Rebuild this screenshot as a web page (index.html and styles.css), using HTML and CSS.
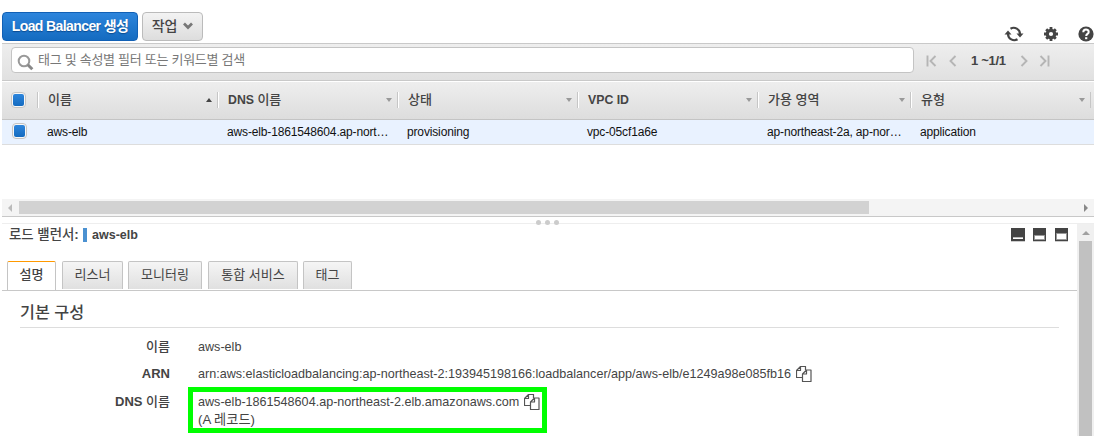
FILE: index.html
```html
<!DOCTYPE html>
<html lang="ko">
<head>
<meta charset="utf-8">
<title>Load Balancer</title>
<link rel="stylesheet" href="styles.css">
</head>
<body>
<svg class="defs" width="0" height="0">
  <symbol id="copy" viewBox="0 0 16 16"><path d="M6 11.500H.5v-7l4-4h5v3.500M4.500.5v4h-4M10.500 4h4.500v11.500H6.500V8zM10.500 4v4h-4" fill="none" stroke="#555" stroke-width="1.200" stroke-linejoin="round"/></symbol>
</svg>
<main class="console">
  <div class="actions">
    <button class="btn primary">Load Balancer 생성</button>
    <button class="btn menu">작업
      <svg width="10" height="8" viewBox="0 0 10 8"><path d="M1 1.500 5 5.500 9 1.500" fill="none" stroke="#777" stroke-width="2.700"/></svg>
    </button>
    <div class="tools">
      <svg width="20" height="16" viewBox="0 0 20 16"><g fill="none" stroke="#444" stroke-width="2.200"><path d="M6.500 2.700A6.300 6.300 0 0 1 16 8M13.500 13.300A6.300 6.300 0 0 1 4 8"/></g><path d="M12.500 7.500h7L16 11.500zM.5 8.500h7L4 4.500z" fill="#444"/></svg>
      <svg width="14" height="14" viewBox="0 0 14 14"><circle cx="7" cy="7" r="3.700" fill="none" stroke="#444" stroke-width="3.200"/><path d="M7 0v3M7 11v3M0 7h3M11 7h3M2.200 2.200l2 2M9.800 9.800l2 2M11.800 2.200l-2 2M4.200 9.800l-2 2" stroke="#444" stroke-width="2.800"/></svg>
      <svg width="16" height="16" viewBox="0 0 16 16"><circle cx="8" cy="8" r="7.600" fill="#444"/><path d="M5.300 6.200c0-3.600 5.400-3.400 5.400-.3C10.700 8 8.200 7.800 8.200 10" fill="none" stroke="#fff" stroke-width="2"/><path d="M7.100 11.200h2.200v2H7.100z" fill="#fff"/></svg>
    </div>
  </div>
  <div class="filter">
    <div class="search">
      <svg width="17" height="17" viewBox="0 0 17 17"><circle cx="7" cy="7" r="5.300" fill="none" stroke="#999" stroke-width="2"/><path d="m10.800 10.800 4.500 4.500" stroke="#888" stroke-width="3"/></svg>
      <span>태그 및 속성별 필터 또는 키워드별 검색</span>
    </div>
    <div class="pager">
      <svg width="11" height="12" viewBox="0 0 11 12"><path d="M1.500.5v11M9.500 1l-5 5 5 5" fill="none" stroke="#b5b5b5" stroke-width="1.900"/></svg>
      <svg width="8" height="12" viewBox="0 0 8 12"><path d="M6.500 1l-5 5 5 5" fill="none" stroke="#b5b5b5" stroke-width="1.900"/></svg>
      <b>1 ~1/1</b>
      <svg width="8" height="12" viewBox="0 0 8 12"><path d="M1.500 1l5 5-5 5" fill="none" stroke="#b5b5b5" stroke-width="1.900"/></svg>
      <svg width="11" height="12" viewBox="0 0 11 12"><path d="M9.500.5v11M1.500 1l5 5-5 5" fill="none" stroke="#b5b5b5" stroke-width="1.900"/></svg>
    </div>
  </div>
  <div class="row head">
    <div class="check"><i></i></div>
    <div class="cell ko">이름<i class="sort up"></i></div>
    <div class="cell"><span>DNS <span class="ko">이름</span></span><i class="sort"></i></div>
    <div class="cell ko">상태<i class="sort"></i></div>
    <div class="cell">VPC ID<i class="sort"></i></div>
    <div class="cell ko">가용 영역<i class="sort"></i></div>
    <div class="cell ko">유형<i class="sort"></i></div>
    <div class="cell"></div>
  </div>
  <div class="row data">
    <div class="check"><i></i></div>
    <div class="cell">aws-elb</div>
    <div class="cell">aws-elb-1861548604.ap-nort…</div>
    <div class="cell">provisioning</div>
    <div class="cell">vpc-05cf1a6e</div>
    <div class="cell">ap-northeast-2a, ap-nor…</div>
    <div class="cell">application</div>
  </div>
  <div class="hscroll"><i class="left"></i><div class="hthumb"></div><i class="right"></i></div>
  <div class="splitter"><i></i><i></i><i></i></div>
  <section class="details">
    <div class="pane">
      <div class="title"><span class="label">로드 밸런서<b>:</b></span><i class="mark"></i><b>aws-elb</b>
        <div class="layouts">
          <svg width="14" height="14"><path d="M0 0h14v13H0z" fill="#444"/><path d="M0 13h14v1H0z" fill="#ccc"/><path d="M2 9h10v2H2z" fill="#fff"/><path d="M2 9h10v.8H2z" fill="#aaa"/></svg>
          <svg width="13" height="14"><path d="M0 0h13v13H0z" fill="#444"/><path d="M0 13h13v1H0z" fill="#ccc"/><path d="M1.500 7.500h10v4h-10z" fill="#fff" stroke="#999"/></svg>
          <svg width="13" height="14"><path d="M0 0h13v13H0z" fill="#444"/><path d="M0 13h13v1H0z" fill="#ccc"/><path d="M1.500 5.500h10v6h-10z" fill="#fff" stroke="#999"/></svg>
        </div>
      </div>
      <nav class="tabs"><a class="tab active">설명</a><a class="tab t2">리스너</a><a class="tab t3">모니터링</a><a class="tab t4">통합 서비스</a><a class="tab t5">태그</a></nav>
      <h2>기본 구성</h2>
      <dl>
        <dt class="ko">이름</dt><dd>aws-elb</dd>
        <dt>ARN</dt><dd><span class="arn">arn:aws:elasticloadbalancing:ap-northeast-2:193945198166:loadbalancer/app/aws-elb/e1249a98e085fb16</span><svg class="copy"><use href="#copy"/></svg></dd>
        <dt>DNS <span class="ko">이름</span></dt><dd class="dns"><span class="host">aws-elb-1861548604.ap-northeast-2.elb.amazonaws.com</span><svg class="copy"><use href="#copy"/></svg><br><span class="record">(A 레코드)</span></dd>
      </dl>
    </div>
    <div class="vscroll"><i class="arrow"></i><div class="vthumb"></div></div>
  </section>
</main>
</body>
</html>
```
FILE: styles.css
```css
*, *::before { box-sizing: border-box; }
body { margin: 0; background: #fff; color: #444; font: 12px/16px "Liberation Sans", "Noto Sans CJK KR", sans-serif; overflow: hidden; }
.defs { position: absolute; }
svg { display: block; flex: none; }
.console { width: 1092px; height: 436px; margin-left: 2px; display: flex; flex-direction: column; }

.actions { height: 43px; flex: none; padding-top: 12px; display: flex; align-items: flex-start; gap: 4px; }
.btn { height: 29px; padding: 0; border-radius: 4px; font: bold 14px/27px "Liberation Sans", "Noto Sans CJK KR", sans-serif; display: flex; justify-content: center; align-items: center; white-space: nowrap; }
.primary { width: 136px; border: 1px solid #1160b5; background: linear-gradient(#2d85dc, #146bc0); color: #fff; letter-spacing: -.6px; text-shadow: 0 1px 1px #0a4b90; }
.menu { width: 61px; gap: 6px; border: 1px solid #bbb; background: linear-gradient(#f3f3f3, #ddd); color: #444; font-weight: 500; letter-spacing: -.2px; }
.menu svg { margin-top: -2px; }
.tools { margin: 14px 0 0 auto; display: flex; align-items: center; gap: 20px; height: 16px; }

.filter { height: 39px; flex: none; border-top: 1px solid #c9c9c9; border-bottom: 1px solid #fff; background: linear-gradient(#eee, #e0e0e0); box-shadow: inset 0 -1px #c9c9c9; display: flex; padding: 3px 0 0 9px; }
.search { width: 903px; height: 26px; border: 1px solid #c4c4c4; border-radius: 4px; background: #fff; padding-left: 5px; display: flex; align-items: center; gap: 4px; color: #777; font-size: 13px; letter-spacing: -.28px; }
.search svg { margin-top: 5px; }
.search span { margin-top: -1px; }
.pager { height: 28px; padding-left: 12px; display: flex; align-items: center; }
.pager svg:nth-child(2) { margin-left: 12px; }
.pager b { margin: 0 12px 0 14px; width: 37px; font-size: 13px; letter-spacing: -.3px; white-space: nowrap; }
.pager svg:last-child { margin-left: 11px; }

.row { display: grid; grid-template-columns: 35px 180px 180px 180px 180px 153px 180px 1px; flex: none; }
.head { height: 38px; background: linear-gradient(#eee, #ddd); border-bottom: 1px solid #c4c4c4; font-size: 12.300px; font-weight: bold; }
.head .cell { height: 16px; margin-top: 10px; border-left: 1px solid #c6c6c6; box-shadow: inset 1px 0 #fff; padding: 0 5px 0 10px; display: flex; align-items: center; justify-content: space-between; }
.head .cell:last-child { padding: 0; }
.ko, dt.ko { font-size: 13px; font-weight: 500; }
.sort { border: 3.500px solid transparent; border-top: 4px solid #999; border-bottom: 0; }
.sort.up { border-top: 0; border-bottom: 4px solid #444; }
.data { height: 25px; background: #e9f2ff; border-bottom: 1px solid #ddd; color: #111; line-height: 24px; letter-spacing: -.15px; }
.data .cell { padding-left: 10px; white-space: nowrap; }
.check { padding: 10px 0 0 9px; }
.data .check { padding: 3px 0 0 10px; }
.check i { display: block; width: 15px; height: 16px; padding: 1px; border: 1px solid #c4c4c4; border-radius: 4px; background: #f7f7f7; }
.check i::before { content: ""; display: block; width: 11px; height: 12px; border-radius: 2px; background: linear-gradient(#2d85dc, #146bc0); }

.hscroll { height: 18px; flex: none; margin-top: 54px; background: #f4f4f4; border-bottom: 1px solid #c8c8c8; display: flex; align-items: center; }
.left { margin: 0 7px 0 6px; border: 4px solid transparent; border-right-color: #bbb; border-left: 0; }
.hthumb { width: 850px; height: 13px; background: #d2d2d2; }
.right { margin: 0 6px 0 auto; border: 4px solid transparent; border-left-color: #888; border-right: 0; }
.splitter { height: 7px; flex: none; border-bottom: 1px solid #eee; display: flex; justify-content: center; gap: 4px; padding: 3px 1px 0 0; }
.splitter i { flex: none; width: 5px; height: 5px; border-radius: 50%; background: #ccc; }

.details { flex: 1; display: flex; min-height: 0; }
.pane { width: 1075px; }
.title { height: 37px; padding: 3px 9px 0 7px; display: flex; font-size: 12.500px; }
.label { width: 70px; font-size: 13.400px; font-weight: 500; white-space: nowrap; }
.mark { width: 4px; height: 14px; margin: 1px 5px 0 4px; background: #4b91d1; }
.layouts { margin: 1px 0 0 auto; display: flex; gap: 8px; }
.layouts svg:last-child { margin-left: 1px; }
.tabs { height: 30px; border-bottom: 1px solid #c8c8c8; display: flex; padding-left: 5px; }
.tab { height: 28px; width: 49px; margin-right: 5px; border: 1px solid #c4c4c4; border-bottom: 0; border-radius: 2px 2px 0 0; background: linear-gradient(#f5f5f5, #e0e0e0); font-size: 13px; line-height: 25px; text-align: center; white-space: nowrap; }
.tab.active { height: 29px; margin-right: 6px; border-top-color: #f90; background: #fff; font-weight: 500; }
.t2 { width: 61px; }
.t3 { width: 74px; margin-right: 6px; }
.t4 { width: 90px; }
h2 { margin: 0 18px 0 18px; height: 37px; padding-top: 12px; border-bottom: 1px solid #ddd; font-size: 16.200px; line-height: 18px; font-weight: 500; }
dl { margin: 9px 0 0; display: grid; grid-template-columns: 168px 1fr; column-gap: 28px; grid-template-rows: 27px 28px 40px; font-size: 12.600px; line-height: 20px; }
dt { text-align: right; font-size: 13px; font-weight: bold; white-space: nowrap; }
dd { margin: 0; white-space: nowrap; }
.copy { display: inline-block; width: 16px; height: 16px; margin-left: 5px; vertical-align: -4px; }
.record { font-size: 13.200px; }
.dns { position: relative; align-self: start; justify-self: start; padding-top: 1px; line-height: 18px; }
.dns::before { content: ""; position: absolute; left: -10px; top: -5px; width: 359px; height: 46px; border: 5px solid #0f0; }
.vscroll { width: 17px; background: #f0f0f0; display: flex; flex-direction: column; align-items: center; }
.arrow { margin: 7px 0 6px; border: 4px solid transparent; border-top: 0; border-bottom-color: #a0a0a0; }
.vthumb { width: 13px; flex: 1; background: #c1c1c1; }
```
